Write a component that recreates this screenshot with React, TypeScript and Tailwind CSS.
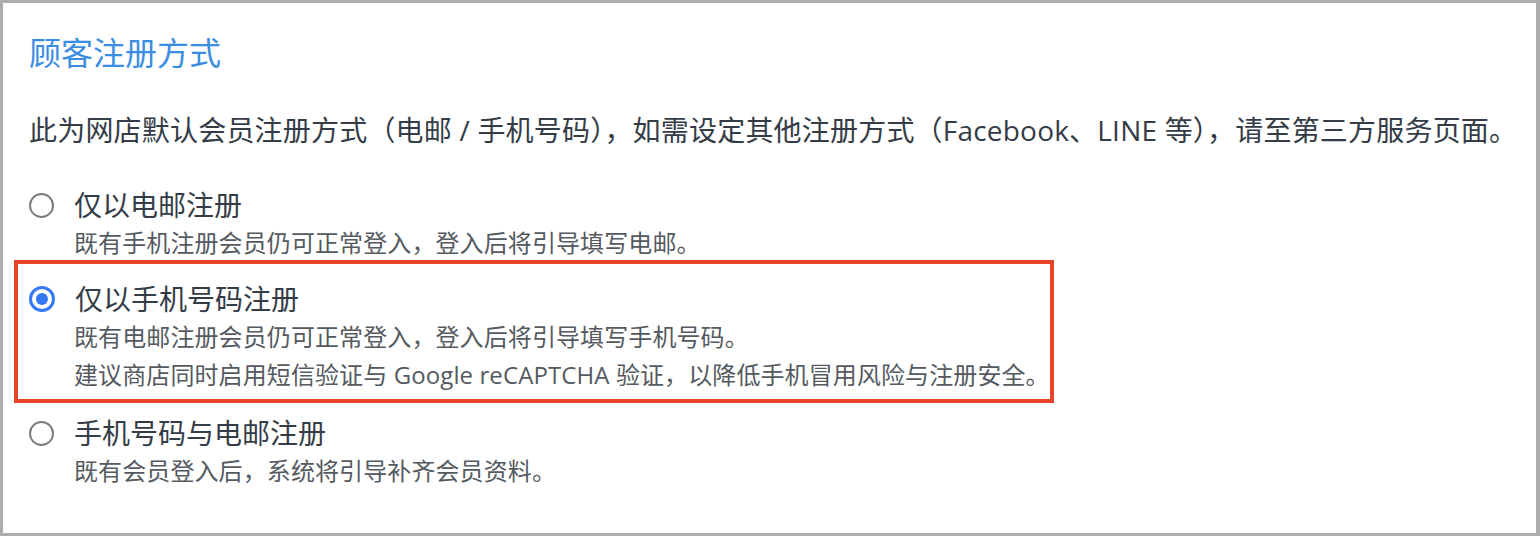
const font = { fontFamily: '"Open Sans", "Noto Sans CJK SC", sans-serif' };

type Option = {
  label: string;
  notes: string[];
  checked?: boolean;
};

const options: Option[] = [
  { label: '仅以电邮注册', notes: ['既有手机注册会员仍可正常登入，登入后将引导填写电邮。'] },
  {
    label: '仅以手机号码注册',
    checked: true,
    notes: [
      '既有电邮注册会员仍可正常登入，登入后将引导填写手机号码。',
      '建议商店同时启用短信验证与 Google reCAPTCHA 验证，以降低手机冒用风险与注册安全。',
    ],
  },
  { label: '手机号码与电邮注册', notes: ['既有会员登入后，系统将引导补齐会员资料。'] },
];

function Radio({ checked }: { checked?: boolean }) {
  if (checked) {
    return (
      <span className="flex h-[26px] w-[26px] shrink-0 items-center justify-center rounded-full border-[3px] border-[#3478f6] bg-white">
        <span className="h-[12px] w-[12px] rounded-full bg-[#3478f6]" />
      </span>
    );
  }
  return <span className="h-[25px] w-[25px] shrink-0 rounded-full border-2 border-[#7b7b7b] bg-white" />;
}

function OptionRow({ option }: { option: Option }) {
  return (
    <div className="relative">
      {option.checked && (
        <div className="pointer-events-none absolute left-[-15px] top-[-20px] h-[143px] w-[1040px] border-4 border-[#e8432b]" />
      )}
      <label className="flex h-[38px] items-center">
        <Radio checked={option.checked} />
        <span className="ml-[20px] text-[28px] leading-[38px] text-[#343c47]">{option.label}</span>
      </label>
      <div className="pl-[45px]">
        {option.notes.map((n) => (
          <p key={n} className="whitespace-nowrap text-[24px] leading-[38px] tracking-[0.1px] text-[#555a61]">
            {n}
          </p>
        ))}
      </div>
    </div>
  );
}

export default function App() {
  return (
    <div
      style={font}
      className="h-[536px] w-[1540px] overflow-hidden border-[3px] border-r-4 border-[#adadad] bg-white px-[26px]"
    >
      <h2 className="pt-[30px] text-[32px] leading-[40px] text-[#3a8de3]">顾客注册方式</h2>
      <p className="mt-[37px] whitespace-nowrap text-[28px] leading-[40px] tracking-[0.2px] text-[#343c47]">
        此为网店默认会员注册方式（电邮 / 手机号码），如需设定其他注册方式（Facebook、LINE 等），请至第三方服务页面。
      </p>
      <div className="mt-[36px] flex flex-col">
        <OptionRow option={options[0]} />
        <div className="mt-[18px]">
          <OptionRow option={options[1]} />
        </div>
        <div className="mt-[20px]">
          <OptionRow option={options[2]} />
        </div>
      </div>
    </div>
  );
}
